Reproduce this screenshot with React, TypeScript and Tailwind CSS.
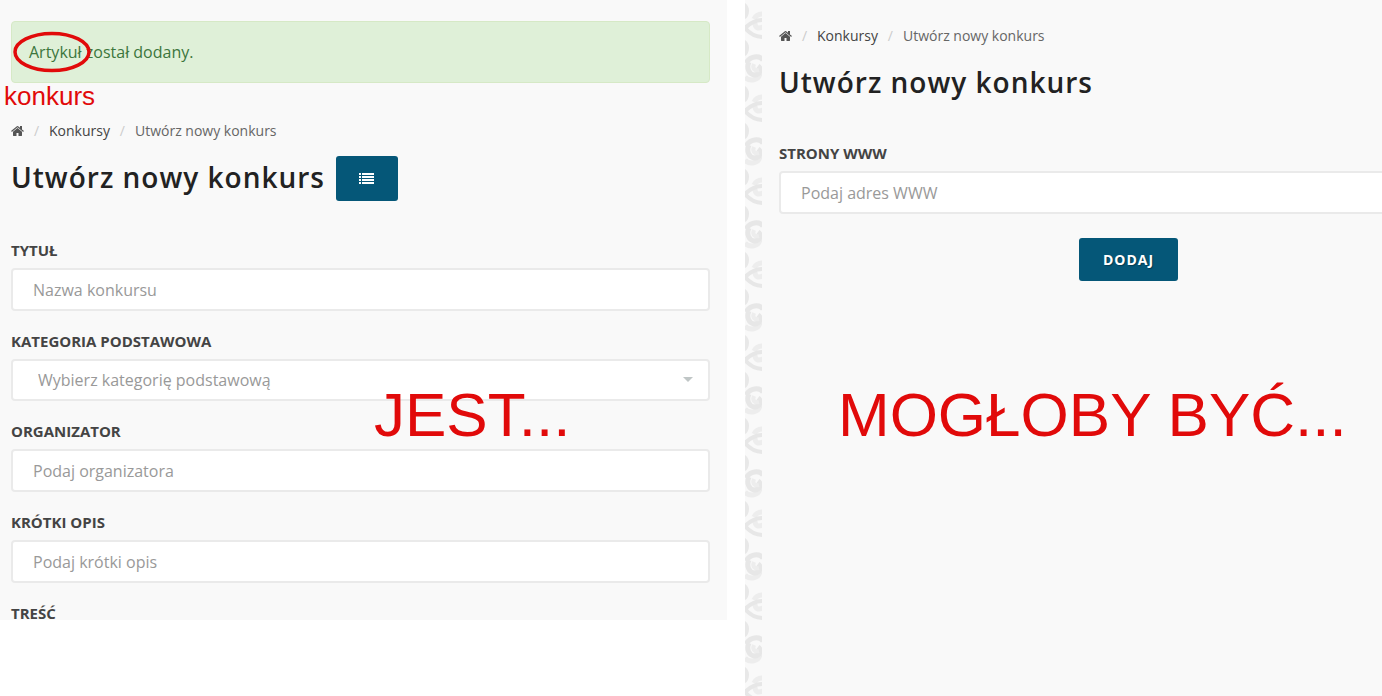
import React, { useState } from 'react';

interface BreadcrumbItem {
  label: string;
  href?: string;
}

const crumbs: BreadcrumbItem[] = [
  { label: 'Konkursy', href: '#konkursy' },
  { label: 'Utwórz nowy konkurs' },
];

const HomeIcon = () => (
  <svg viewBox="0 0 1664 1536" className="h-3 w-[13px]" fill="currentColor" aria-hidden="true">
    <path
      transform="translate(0 1408) scale(1 -1)"
      d="M1408 544v-480q0 -26 -19 -45t-45 -19h-384v384h-256v-384h-384q-26 0 -45 19t-19 45v480q0 1 .5 3t.5 3l575 474l575 -474q1 -2 1 -6zM1631 613l-62 -74q-8 -9 -21 -11h-3q-13 0 -21 7l-692 577l-692 -577q-12 -8 -24 -7q-13 2 -21 11l-62 74q-8 10 -7 23.5t11 21.5l719 599q32 26 76 26t76 -26l244 -204v195q0 14 9 23t23 9h192q14 0 23 -9t9 -23v-408l219 -182q10 -8 11 -21.5t-7 -23.5z"
    />
  </svg>
);

const ListIcon = () => (
  <svg viewBox="0 0 15 11" className="h-[11px] w-[15px]" fill="currentColor" aria-hidden="true">
    {[0, 3, 6, 9].map((y) => (
      <React.Fragment key={y}>
        <rect x="0" y={y} width="2" height="2" />
        <rect x="3" y={y} width="12" height="2" />
      </React.Fragment>
    ))}
  </svg>
);

// Ornament repeated down the page edge
const OrnamentStrip = () => (
  <svg className="absolute inset-0 h-full w-full" aria-hidden="true">
    <defs>
      <pattern id="ornament" width="17" height="83" patternUnits="userSpaceOnUse">
        <rect width="17" height="83" fill="#f9f9f9" />
        <g fill="#e8e8e8">
          <path d="M0 3C3 5 4 8 4 11C4 15 2 18 0 19Z" />
          <path d="M0 40C3 42 4 45 4 48C4 52 2 55 0 56Z" />
        </g>
        <g fill="none" stroke="#e7e7e7" strokeWidth="4">
          <path d="M18 14C14 14 11 15 9 19" stroke="#ededed" strokeWidth="5" />
          <path d="M10 23C10 28 13 29 18 27" stroke="#ededed" strokeWidth="5" />
          <path d="M18 20C12 20 6 22 0 28C5 34 11 37 18 37" />
          <path d="M0 77C4 82 14 81 15 73" stroke="#ededed" strokeWidth="5" />
          <path d="M1 63C5 56 14 55 18 60" strokeWidth="5" />
          <path d="M4 62C1 68 4 74 9 75C15 75 17 69 13 66" strokeWidth="5" />
          <path d="M9 64C7 69 10 71 14 70" stroke="#ededed" />
        </g>
      </pattern>
    </defs>
    <rect width="100%" height="100%" fill="url(#ornament)" />
  </svg>
);

const Breadcrumb = () => (
  <nav aria-label="Nawigacja" className="mb-[13px]">
    <ol className="flex h-6 items-center text-sm text-[#666]">
      <li>
        <a href="#home" aria-label="Strona główna" className="block text-[#555]">
          <HomeIcon />
        </a>
      </li>
      {crumbs.map((item) => (
        <li key={item.label} className="flex">
          <span className="w-[25px] text-center text-[#ccc]">/</span>
          {item.href ? (
            <a href={item.href} className="text-[#444]">{item.label}</a>
          ) : (
            <span>{item.label}</span>
          )}
        </li>
      ))}
    </ol>
  </nav>
);

const PageTitle = () => (
  <h1 className="h-[45px] text-[28px] leading-[42px] font-semibold tracking-[1px] whitespace-nowrap text-[#222]">
    Utwórz nowy konkurs
  </h1>
);

interface FieldProps {
  id: string;
  label: string;
  placeholder: string;
}

const labelClass = 'mb-2 block text-[15px] leading-5 font-bold text-[#444]';

const TextField = ({ id, label, placeholder }: FieldProps) => {
  const [value, setValue] = useState('');

  return (
    <div>
      <label htmlFor={id} className={labelClass}>{label}</label>
      <input
        id={id}
        type="text"
        value={value}
        onChange={(e) => setValue(e.target.value)}
        placeholder={placeholder}
        className="block h-[43px] w-full rounded border-2 border-[#eaeaea] bg-white px-5 text-base text-[#444] placeholder:text-[#999] outline-none"
      />
    </div>
  );
};

const SelectField = ({ id, label, placeholder }: FieldProps) => (
  <div>
    <label htmlFor={id} className={labelClass}>{label}</label>
    <div className="relative">
      <select
        id={id}
        className="block h-[42px] w-full appearance-none rounded border-2 border-[#eaeaea] bg-white px-[25px] text-base text-[#999] outline-none"
      >
        <option>{placeholder}</option>
      </select>
      <svg viewBox="0 0 10 5" className="pointer-events-none absolute top-[18px] right-[17px] h-[5px] w-[10px]" fill="#c0c6c6" aria-hidden="true">
        <path d="M0 0H10L5 5Z" />
      </svg>
    </div>
  </div>
);

export default function App() {
  return (
    <div className="grid min-h-screen grid-cols-[minmax(0,727fr)_18px_minmax(0,637fr)] overflow-hidden bg-white font-['Open_Sans','Noto_Sans',sans-serif]">
      {/* Obecny formularz */}
      <section className="relative self-start bg-[#f9f9f9] pt-[21px] pr-[17px] pl-[11px]">
        <div role="status" className="relative mb-9 rounded border border-[#d6e9c6] bg-[#dff0d8] px-[17px] py-[18px] text-base text-[#3c763d]">
          Artykuł został dodany.
          <svg viewBox="0 0 78 42" className="absolute top-[9px] left-[1px] h-[42px] w-[78px]" fill="none" aria-hidden="true">
            <ellipse cx="39" cy="21" rx="37" ry="18.5" stroke="#e10a0a" strokeWidth="3.5" />
          </svg>
          <span className="absolute top-[59px] -left-2 font-['Liberation_Sans',sans-serif] text-[26px] leading-[30px] text-[#e10a0a]">
            konkurs
          </span>
        </div>

        <Breadcrumb />
        <div className="mb-[39px] flex gap-[11px]">
          <PageTitle />
          <button type="button" aria-label="Lista konkursów" className="flex h-[45px] w-[62px] items-center justify-center rounded-[3px] bg-[#055778] text-white">
            <ListIcon />
          </button>
        </div>

        <form className="flex flex-col gap-5">
          <TextField id="title" label="TYTUŁ" placeholder="Nazwa konkursu" />
          <SelectField id="category" label="KATEGORIA PODSTAWOWA" placeholder="Wybierz kategorię podstawową" />
          <TextField id="organizer" label="ORGANIZATOR" placeholder="Podaj organizatora" />
          <TextField id="summary" label="KRÓTKI OPIS" placeholder="Podaj krótki opis" />
          <h2 className="h-[17px] text-[15px] leading-5 font-bold text-[#444]">TREŚĆ</h2>
        </form>

        <p className="pointer-events-none absolute top-[379px] left-[374px] font-['Liberation_Sans',sans-serif] text-[62px] leading-[72px] text-[#e10a0a]">
          JEST...
        </p>
      </section>

      {/* Proponowany formularz */}
      <section className="relative col-start-3 flex overflow-hidden bg-[#f9f9f9]">
        <div className="relative w-[17px] shrink-0">
          <OrnamentStrip />
        </div>
        <div className="w-[716px] shrink-0 pt-6 pl-[17px]">
          <Breadcrumb />
          <div className="mb-[37px]">
            <PageTitle />
          </div>
          <form className="flex flex-col items-stretch gap-6" onSubmit={(e) => e.preventDefault()}>
            <TextField id="website" label="STRONY WWW" placeholder="Podaj adres WWW" />
            <button type="submit" className="h-[43px] self-center rounded-[3px] bg-[#055778] px-6 text-sm font-bold tracking-[1px] text-white text-shadow-[1px_1px_1px_rgb(0_0_0/0.3)]">
              DODAJ
            </button>
          </form>
        </div>

        <p className="pointer-events-none absolute top-[379px] left-[93px] font-['Liberation_Sans',sans-serif] text-[62px] leading-[72px] whitespace-nowrap text-[#e10a0a]">
          MOGŁOBY BYĆ...
        </p>
      </section>
    </div>
  );
}
